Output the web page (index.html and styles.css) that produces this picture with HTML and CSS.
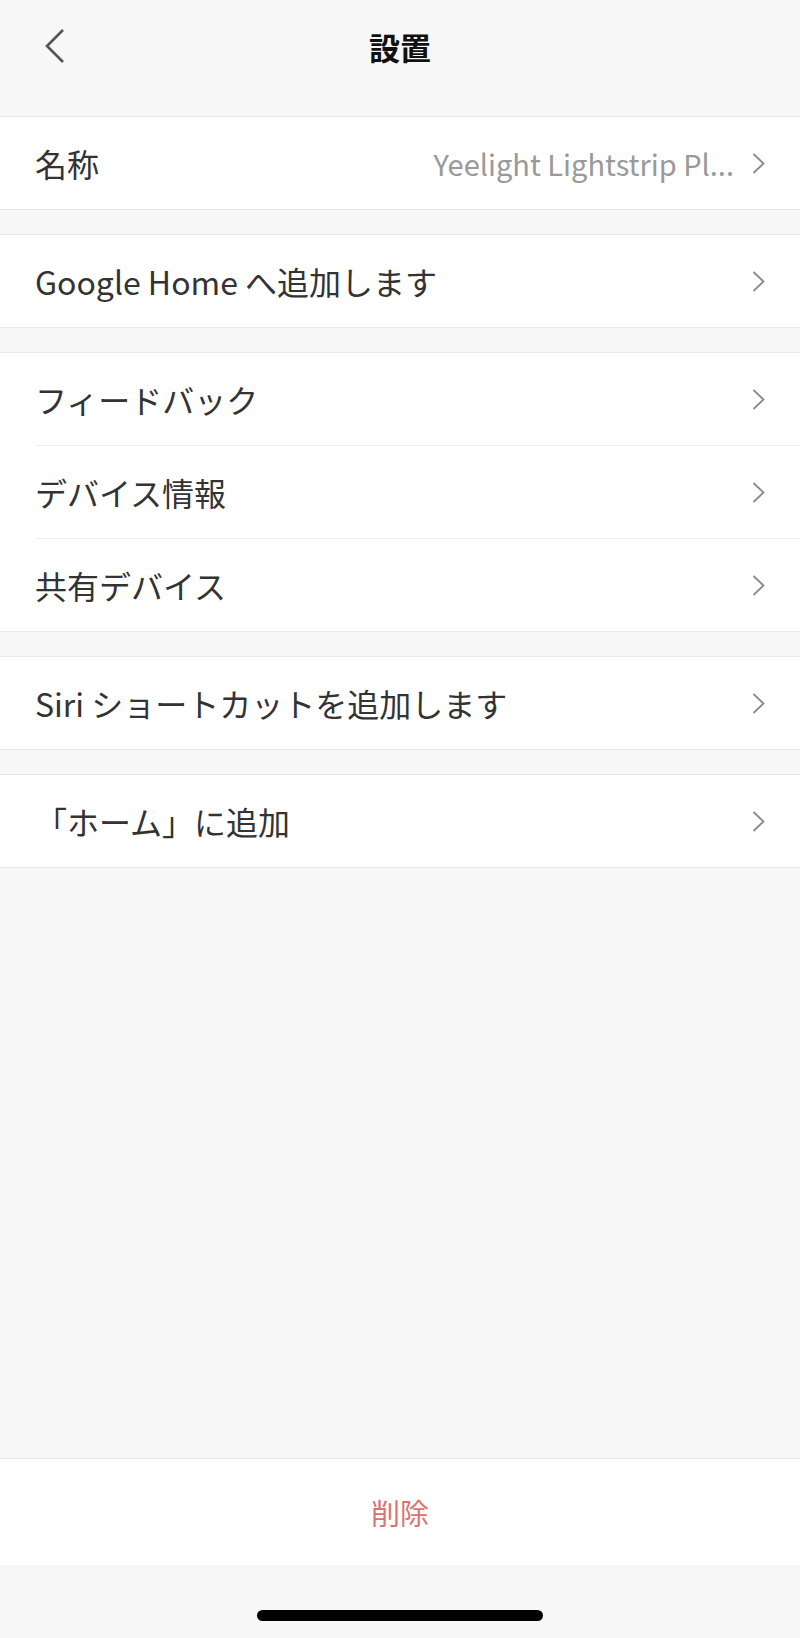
FILE: index.html
```html
<!DOCTYPE html>
<html lang="ja">
<head>
  <meta charset="UTF-8" />
  <meta name="viewport" content="width=device-width, initial-scale=1.0"/>
  <title>設置</title>
  <link rel="stylesheet" href="styles.css">
</head>
<body>
  <div class="page">
    <header class="topbar">
      <svg class="back" width="22" height="36" viewBox="0 0 22 36">
        <polyline points="19,2 3,18 19,34" fill="none" stroke="#555" stroke-width="2.6" />
      </svg>
      <h1>設置</h1>
    </header>

    <div class="group">
      <div class="row">
        <span class="label">名称</span>
        <span class="value">Yeelight Lightstrip Pl...</span>
        <svg class="chev" width="13" height="21" viewBox="0 0 13 21">
          <polyline points="1.5,1 11.5,10.5 1.5,20" fill="none" stroke="#8a8a8a" stroke-width="1.8" />
        </svg>
      </div>
    </div>

    <div class="group">
      <div class="row">
        <span class="label">Google Home へ追加します</span>
        <svg class="chev" width="13" height="21" viewBox="0 0 13 21">
          <polyline points="1.5,1 11.5,10.5 1.5,20" fill="none" stroke="#8a8a8a" stroke-width="1.8" />
        </svg>
      </div>
    </div>

    <div class="group">
      <div class="row">
        <span class="label">フィードバック</span>
        <svg class="chev" width="13" height="21" viewBox="0 0 13 21">
          <polyline points="1.5,1 11.5,10.5 1.5,20" fill="none" stroke="#8a8a8a" stroke-width="1.8" />
        </svg>
      </div>
      <div class="row">
        <span class="label">デバイス情報</span>
        <svg class="chev" width="13" height="21" viewBox="0 0 13 21">
          <polyline points="1.5,1 11.5,10.5 1.5,20" fill="none" stroke="#8a8a8a" stroke-width="1.8" />
        </svg>
      </div>
      <div class="row">
        <span class="label">共有デバイス</span>
        <svg class="chev" width="13" height="21" viewBox="0 0 13 21">
          <polyline points="1.5,1 11.5,10.5 1.5,20" fill="none" stroke="#8a8a8a" stroke-width="1.8" />
        </svg>
      </div>
    </div>

    <div class="group">
      <div class="row">
        <span class="label">Siri ショートカットを追加します</span>
        <svg class="chev" width="13" height="21" viewBox="0 0 13 21">
          <polyline points="1.5,1 11.5,10.5 1.5,20" fill="none" stroke="#8a8a8a" stroke-width="1.8" />
        </svg>
      </div>
    </div>

    <div class="group">
      <div class="row">
        <span class="label">「ホーム」に追加</span>
        <svg class="chev" width="13" height="21" viewBox="0 0 13 21">
          <polyline points="1.5,1 11.5,10.5 1.5,20" fill="none" stroke="#8a8a8a" stroke-width="1.8" />
        </svg>
      </div>
    </div>

    <div class="spacer"></div>

    <div class="delete">削除</div>

    <div class="home-area">
      <div class="home-bar"></div>
    </div>
  </div>
</body>
</html>
```

FILE: styles.css
```css
body {
  margin: 0;
  background: #f7f7f7;
  font-family: "Noto Sans CJK JP", "Noto Sans", sans-serif;
  color: #333;
}
.page {
  display: flex;
  flex-direction: column;
  min-height: 1638px;
}
.topbar {
  position: relative;
  height: 116px;
  display: flex;
  align-items: flex-start;
  justify-content: center;
}
.topbar h1 {
  margin: 24px 0 0;
  font-size: 31px;
  font-weight: bold;
  line-height: 46px;
  color: #111;
}
.back {
  position: absolute;
  left: 44px;
  top: 28px;
}
.group {
  background: #fff;
  border-top: 1px solid #e8e8e8;
  border-bottom: 1px solid #e8e8e8;
  margin-bottom: 24px;
}
.row {
  display: flex;
  align-items: center;
  height: 92px;
  margin-left: 35px;
  padding-right: 35px;
  font-size: 32px;
}
.row + .row {
  border-top: 1px solid #ececec;
}
.label {
  flex: 1;
  white-space: nowrap;
}
.value {
  color: #999;
  font-size: 29px;
  margin-right: 18px;
  white-space: nowrap;
}
.chev {
  flex: none;
}
.spacer {
  flex: 1;
}
.delete {
  background: #fff;
  border-top: 1px solid #e8e8e8;
  height: 106px;
  display: flex;
  align-items: center;
  justify-content: center;
  font-size: 29px;
  color: #db7272;
}
.home-area {
  height: 73px;
  display: flex;
  justify-content: center;
}
.home-bar {
  margin-top: 45px;
  width: 286px;
  height: 11px;
  border-radius: 6px;
  background: #000;
}
```
